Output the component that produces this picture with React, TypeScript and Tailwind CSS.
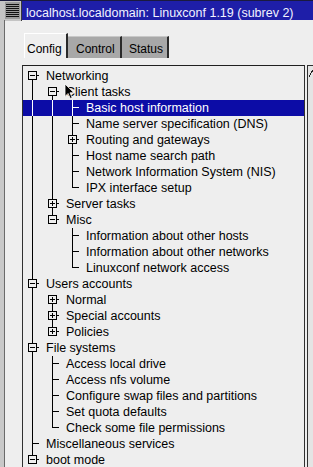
import React from "react";

type Row = {
  label: string;
  level: number;
  kind: "open" | "closed" | "leaf";
  guides: boolean[]; // ancestor levels whose line keeps going
  first?: boolean;
  last?: boolean;
  selected?: boolean;
};

const ROWS: Row[] = [
  { label: "Networking", level: 0, kind: "open", guides: [], first: true },
  { label: "Client tasks", level: 1, kind: "open", guides: [true], first: true },
  { label: "Basic host information", level: 2, kind: "leaf", guides: [true, true], first: true, selected: true },
  { label: "Name server specification (DNS)", level: 2, kind: "leaf", guides: [true, true] },
  { label: "Routing and gateways", level: 2, kind: "closed", guides: [true, true] },
  { label: "Host name search path", level: 2, kind: "leaf", guides: [true, true] },
  { label: "Network Information System (NIS)", level: 2, kind: "leaf", guides: [true, true] },
  { label: "IPX interface setup", level: 2, kind: "leaf", guides: [true, true], last: true },
  { label: "Server tasks", level: 1, kind: "closed", guides: [true] },
  { label: "Misc", level: 1, kind: "open", guides: [true], last: true },
  { label: "Information about other hosts", level: 2, kind: "leaf", guides: [true, false], first: true },
  { label: "Information about other networks", level: 2, kind: "leaf", guides: [true, false] },
  { label: "Linuxconf network access", level: 2, kind: "leaf", guides: [true, false], last: true },
  { label: "Users accounts", level: 0, kind: "open", guides: [] },
  { label: "Normal", level: 1, kind: "closed", guides: [true], first: true },
  { label: "Special accounts", level: 1, kind: "closed", guides: [true] },
  { label: "Policies", level: 1, kind: "closed", guides: [true], last: true },
  { label: "File systems", level: 0, kind: "open", guides: [] },
  { label: "Access local drive", level: 1, kind: "leaf", guides: [true], first: true },
  { label: "Access nfs volume", level: 1, kind: "leaf", guides: [true] },
  { label: "Configure swap files and partitions", level: 1, kind: "leaf", guides: [true] },
  { label: "Set quota defaults", level: 1, kind: "leaf", guides: [true] },
  { label: "Check some file permissions", level: 1, kind: "leaf", guides: [true], last: true },
  { label: "Miscellaneous services", level: 0, kind: "leaf", guides: [] },
  { label: "boot mode", level: 0, kind: "open", guides: [], last: true },
];

// one 20px column of tree lines
function GuideCell({ on, color }: { on: boolean; color: string }) {
  return (
    <svg width="20" height="16" className="shrink-0" shapeRendering="crispEdges">
      {on && <line x1="9.5" y1="0" x2="9.5" y2="16" stroke={color} />}
    </svg>
  );
}

function NodeCell({ row, color, fill }: { row: Row; color: string; fill: string }) {
  if (row.kind === "leaf") {
    return (
      <svg width="20" height="16" className="shrink-0" shapeRendering="crispEdges">
        <line x1="9.5" y1="0" x2="9.5" y2={row.last ? 8 : 16} stroke={color} />
        <line x1="9.5" y1="7.5" x2="16" y2="7.5" stroke={color} />
      </svg>
    );
  }
  return (
    <svg width="20" height="16" className="shrink-0" shapeRendering="crispEdges">
      {!row.first && <line x1="9.5" y1="0" x2="9.5" y2="3.5" stroke={color} />}
      {!row.last && <line x1="9.5" y1="11.5" x2="9.5" y2="16" stroke={color} />}
      <rect x="5.5" y="3.5" width="8" height="8" fill={fill} stroke={color} />
      <line x1="7" y1="7.5" x2="12" y2="7.5" stroke={color} />
      {row.kind === "closed" && <line x1="9.5" y1="5" x2="9.5" y2="10" stroke={color} />}
      <line x1="13.5" y1="7.5" x2="16" y2="7.5" stroke={color} />
    </svg>
  );
}

function TreeRow({ row }: { row: Row }) {
  const color = row.selected ? "#ffffff" : "#000000";
  const fill = row.selected ? "#0c0ca6" : "#eeeeee";
  return (
    <div className={`flex h-4 items-start ${row.selected ? "bg-[#0c0ca6] text-white" : "text-black"}`}>
      {row.guides.map((g, i) => (
        <GuideCell key={i} on={g} color={color} />
      ))}
      <NodeCell row={row} color={color} fill={fill} />
      <span className="pl-[3px] whitespace-nowrap text-[12.5px] leading-4">{row.label}</span>
    </div>
  );
}

function MenuButton() {
  return (
    <svg width="22" height="20" className="shrink-0" shapeRendering="crispEdges">
      <rect x="0" y="0" width="22" height="20" fill="#c4c4c4" />
      <rect x="5" y="1" width="15" height="17" fill="#9a9a9a" />
      {[3, 5, 7, 9, 11, 13, 15].map((y) => (
        <line key={y} x1="6" y1={y + 0.5} x2="19" y2={y + 0.5} stroke="#111" />
      ))}
      <line x1="21.5" y1="0" x2="21.5" y2="20" stroke="#3a3a3a" />
    </svg>
  );
}

function Cursor() {
  return (
    <svg width="12" height="17" className="absolute left-[64px] top-[83px]" viewBox="0 0 12 17">
      <path d="M1 1 L1 13.5 L4 10.5 L6.3 15.5 L8.2 14.6 L6 9.8 L10 9.8 Z" fill="#000" stroke="#fff" strokeWidth="0.8" />
    </svg>
  );
}

export default function App() {
  return (
    <div className="relative w-[313px] h-[467px] overflow-hidden bg-[#eeeeee] font-['Liberation_Sans',Arial,sans-serif] text-black">
      {/* title bar */}
      <div className="flex h-5 border-t border-[#1a1a40]">
        <MenuButton />
        <div className="flex-1 bg-[#1e1ea8] pl-[4px] pt-[5px] text-[12.5px] leading-[14px] text-[#f2f2ff] whitespace-nowrap">
          localhost.localdomain: Linuxconf 1.19 (subrev 2)
        </div>
      </div>

      <div className="flex h-[447px]">
        {/* left window frame */}
        <div className="w-[5px] shrink-0 bg-[#c8c8c8] border-r border-[#6a6a6a]" />

        <div className="flex-1 flex flex-col pt-[13px]">
          {/* notebook tabs */}
          <div className="flex h-[25px] items-start ml-[19px] text-[12px]">
            <div className="h-[25px] w-[44px] border-l border-t border-white border-r-2 border-r-[#2a2a2a] pl-[2px] pt-[7px] leading-4">
              Config
            </div>
            <div className="mt-[3px] h-[22px] w-[54px] bg-[#a8a8a8] border-t border-[#c8c8c8] border-r-2 border-r-[#2a2a2a] pl-[8px] pt-[4px] leading-4">
              Control
            </div>
            <div className="mt-[3px] h-[22px] w-[47px] bg-[#a8a8a8] border-t border-[#c8c8c8] border-r-2 border-r-[#2a2a2a] pl-[7px] pt-[4px] leading-4">
              Status
            </div>
          </div>

          {/* tree + scrollbar */}
          <div className="flex mt-[7px] ml-[17px] flex-1">
            <div className="w-[283px] shrink-0 border-l border-t border-r border-l-[#303030] border-t-[#202020] border-r-[#303030] pt-[2px] overflow-hidden">
              {ROWS.map((r) => (
                <TreeRow key={r.label} row={r} />
              ))}
            </div>
            <div className="ml-[2px] flex-1 border-l border-t border-[#303030] bg-[#e4e4e4]">
              <svg width="8" height="12" className="mt-[1px]" shapeRendering="crispEdges">
                <path d="M1 10 L6 1 L11 10" fill="none" stroke="#222" />
              </svg>
            </div>
          </div>
        </div>
      </div>

      <Cursor />
    </div>
  );
}
